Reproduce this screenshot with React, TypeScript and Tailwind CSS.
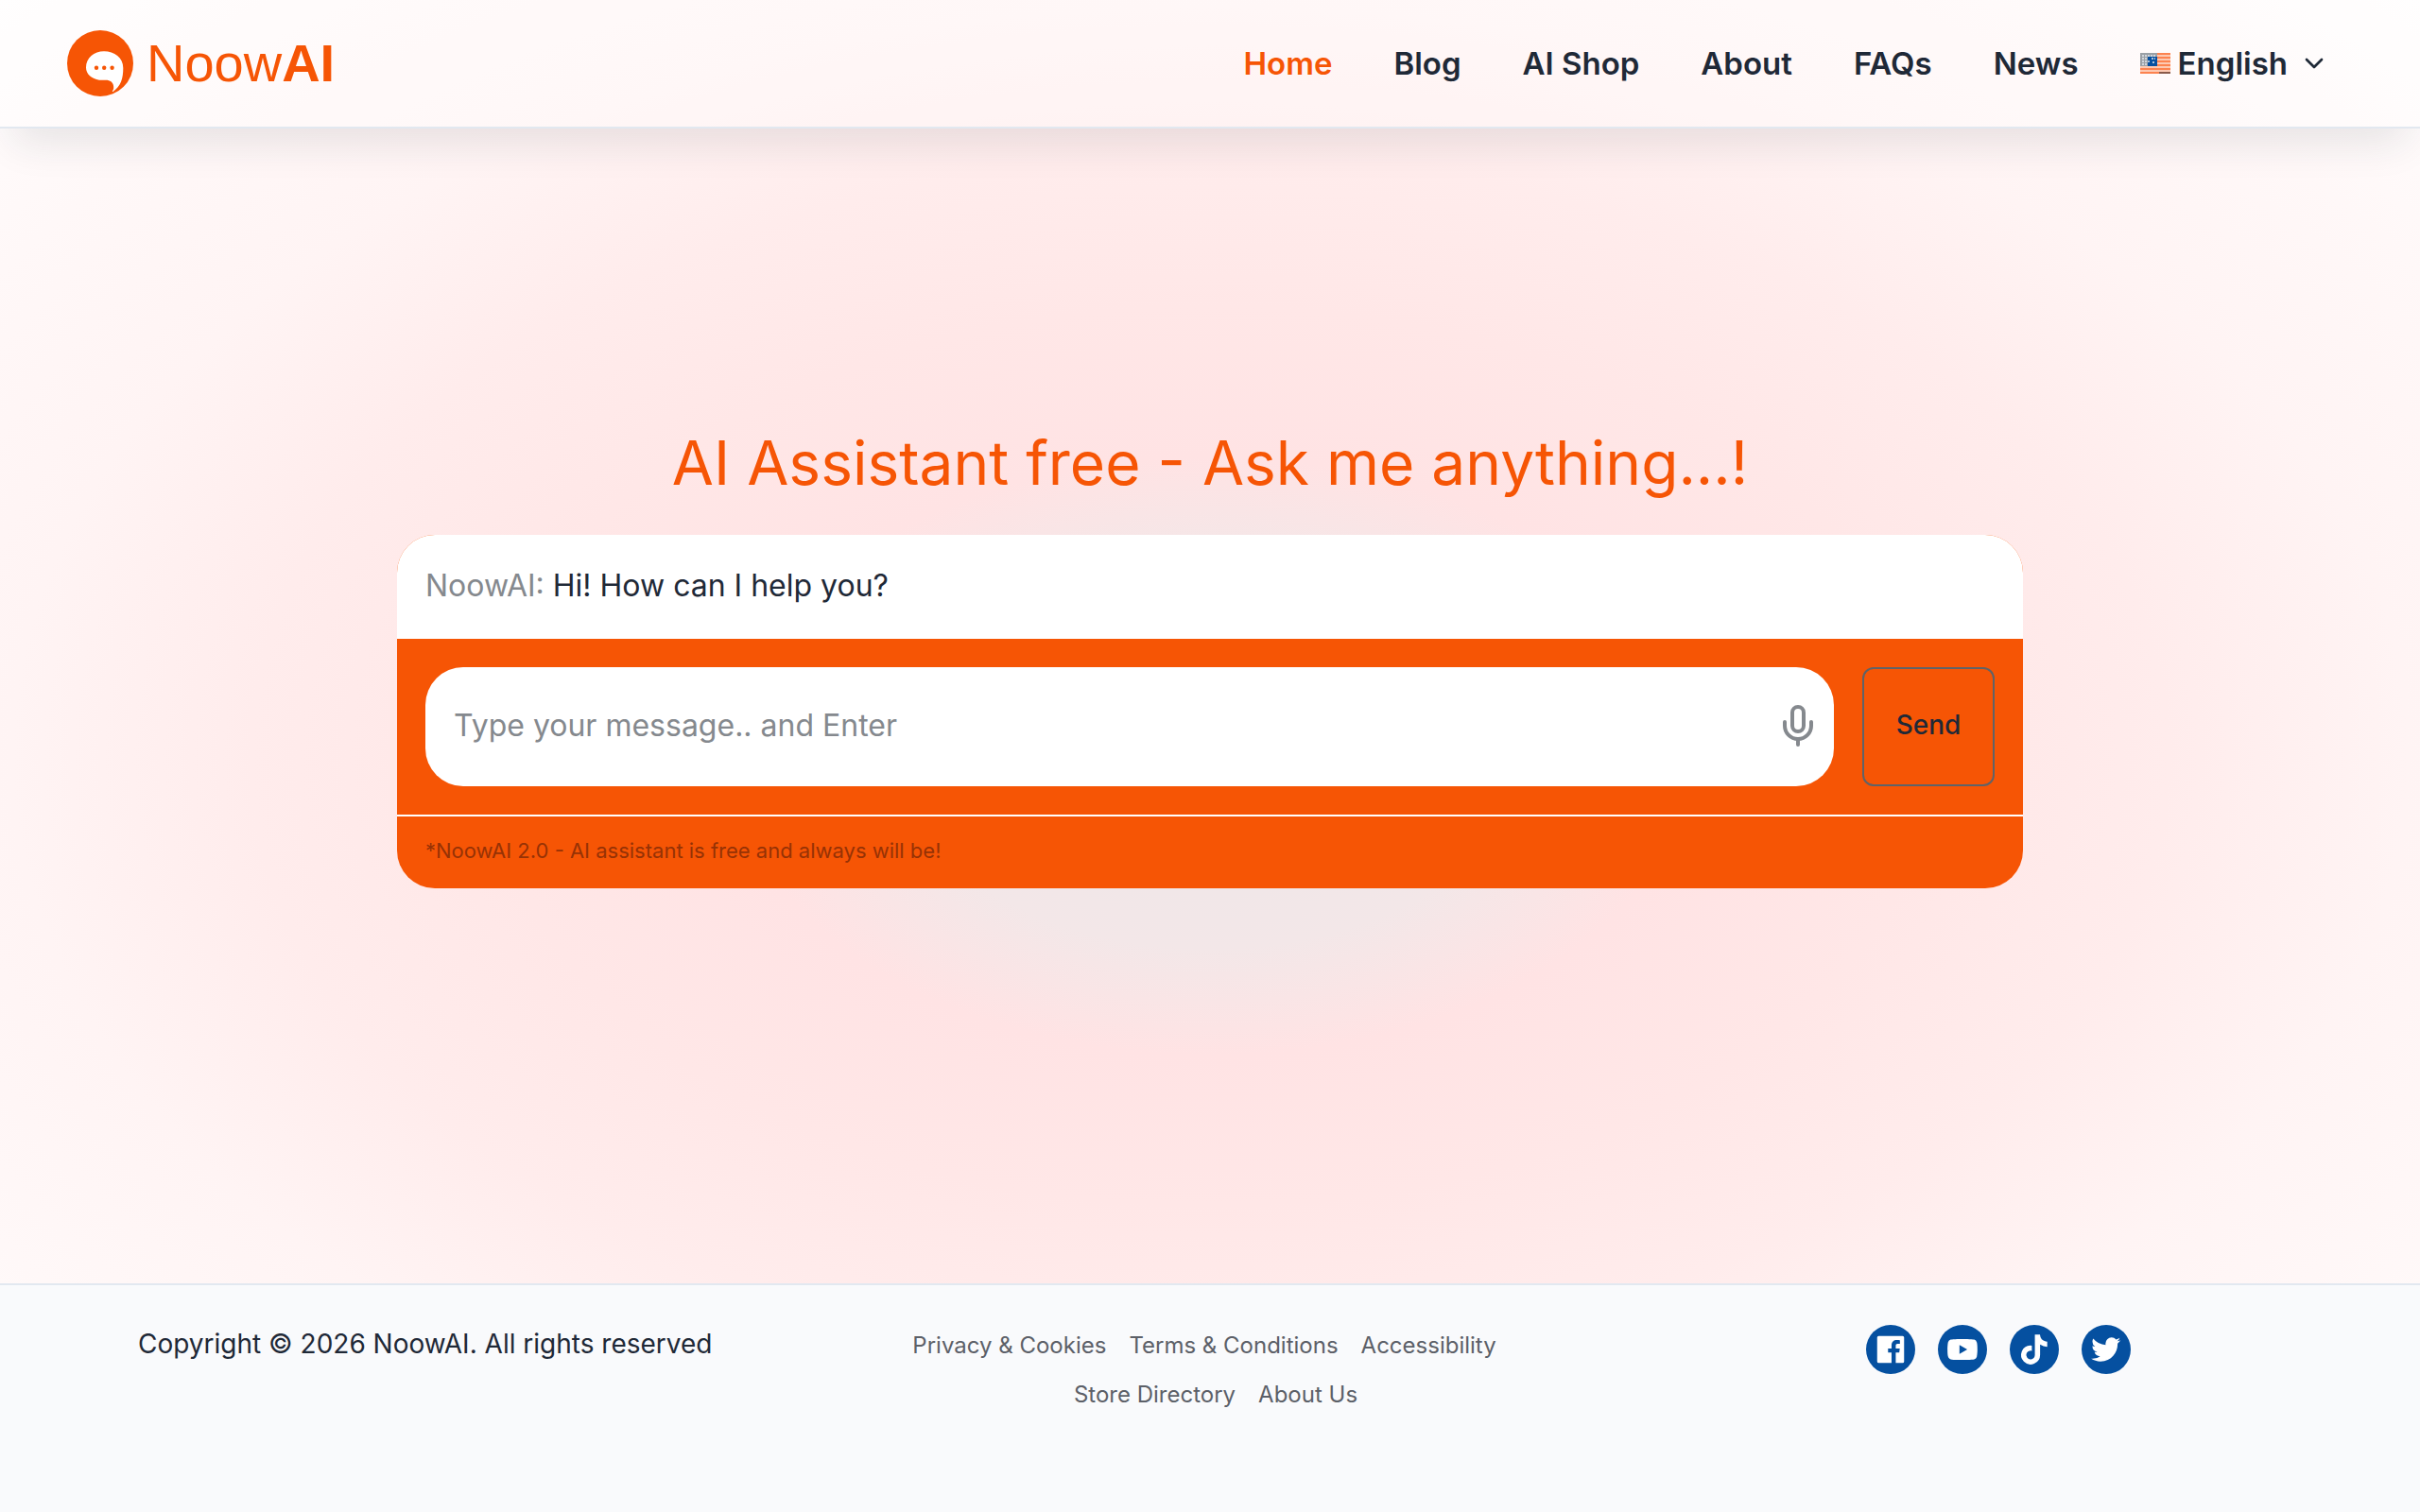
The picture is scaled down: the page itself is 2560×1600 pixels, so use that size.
import React, { FC } from "react";
import { ChevronDown, Mic } from "lucide-react";
import {
  BiLogoFacebookSquare,
  BiLogoTiktok,
  BiLogoTwitter,
  BiLogoYoutube,
} from "react-icons/bi";

const navItems = ["Home", "Blog", "AI Shop", "About", "FAQs", "News"];

const footerLinks = [
  "Privacy & Cookies",
  "Terms & Conditions",
  "Accessibility",
  "Store Directory",
  "About Us",
];

const socials = [
  { name: "Facebook", Icon: BiLogoFacebookSquare },
  { name: "YouTube", Icon: BiLogoYoutube },
  { name: "TikTok", Icon: BiLogoTiktok },
  { name: "Twitter", Icon: BiLogoTwitter },
];

const Logo: FC = () => (
  <a href="#" className="flex items-center gap-[14px] text-[#f65505]">
    <svg className="size-[70px]" viewBox="0 0 70 70" aria-hidden="true">
      <circle cx="35" cy="35" r="35" fill="currentColor" />
      <path
        d="M39 22.3C50 22.3 59.3 29 59.3 40C59.3 51 57 59 48.3 65.2L47.8 64.5C49.6 62.5 49.3 60.5 49 58.5C48.4 55 45.5 52.7 41 52.7H34C26 51.5 20 46.5 20 39.5C20 29.5 28.5 22.3 39 22.3Z"
        fill="#fff"
      />
      <circle cx="31" cy="39.7" r="2.2" fill="currentColor" />
      <circle cx="39.2" cy="39.7" r="2.2" fill="currentColor" />
      <circle cx="47.6" cy="39.7" r="2.2" fill="currentColor" />
    </svg>
    <span className="font-['Liberation_Sans',Arial,sans-serif] text-[56px] leading-[68px]">
      Noow<span className="font-bold">AI</span>
    </span>
  </a>
);

const Flag: FC = () => (
  <svg className="h-[22px] w-8" viewBox="0 0 32 22" aria-hidden="true">
    <rect width="32" height="22" fill="#fdc9b2" />
    <path
      d="M0 1H32M16 5H32M16 9H32M0 13H32M0 17H32M0 21H32"
      stroke="#fc8350"
      strokeWidth="2"
    />
    <rect width="18" height="14" fill="#9aa0a6" />
    <rect x="8" y="4" width="10" height="10" fill="#0550a0" />
    <path
      d="M2 3H16M2 6H8M12 6H16M2 9H10M2 12H8M13 10H15"
      stroke="#e3e8ee"
      strokeWidth="1.5"
      strokeDasharray="2 1"
    />
    <rect x="20" y="20" width="12" height="2" fill="#8a5a4a" />
  </svg>
);

const Header: FC = () => {
  return (
    <header className="flex items-center justify-between border-b-2 border-slate-200 bg-white/30 py-8 pr-24 pl-[71px] shadow-[0_28px_44px_-14px_rgba(30,41,59,0.11)]">
      <Logo />
      <nav className="flex items-center gap-[65px] text-[33px] leading-10 font-semibold">
        {navItems.map((item, i) => (
          <a key={item} href="#" className={i === 0 ? "text-[#f65505]" : ""}>
            {item}
          </a>
        ))}
        <button type="button" className="flex items-center">
          <Flag />
          <span className="ml-2">English</span>
          <ChevronDown className="ml-3 size-8" />
        </button>
      </nav>
    </header>
  );
};

const Chat: FC = () => {
  return (
    <main className="mx-auto w-full max-w-[1720px] flex-1 pt-[314px]">
      <h1 className="text-center text-[64px] leading-20 text-[#f65505]">
        AI Assistant free - Ask me anything...!
      </h1>

      <div className="mt-9 overflow-hidden rounded-[40px] bg-[#f65505]">
        <p className="bg-white px-[30px] pt-[30px] pb-8 text-[32px] leading-12">
          <span className="text-[#85898e]">NoowAI: </span>
          Hi! How can I help you?
        </p>
        <form className="flex gap-[30px] border-b-2 border-white p-[30px]">
          <div className="flex flex-1 items-center rounded-[40px] bg-white pr-[14px] pl-[30px]">
            <input
              type="text"
              aria-label="Message"
              placeholder="Type your message.. and Enter"
              className="h-[126px] flex-1 bg-transparent pb-1 text-[32px] outline-none placeholder:text-[#85898e]"
            />
            <button type="button" aria-label="Speak" className="pb-0.5">
              <Mic className="size-12 text-[#85898e]" />
            </button>
          </div>
          <button
            type="button"
            className="w-[140px] rounded-xl border-2 border-[#5f6368] pb-1 text-[28px] font-medium"
          >
            Send
          </button>
        </form>
        <p className="px-[30px] pt-4 pb-5 text-[22px] leading-10 text-[#963205]">
          *NoowAI 2.0 - AI assistant is free and always will be!
        </p>
      </div>
    </main>
  );
};

const Footer: FC = () => {
  return (
    <footer className="grid grid-cols-3 border-t-2 border-slate-200 bg-[#f9fafc] pt-[38px] pr-[134px] pb-[98px] pl-[146px]">
      <p className="text-[28px] leading-[48px]">
        Copyright © 2026 NoowAI. All rights reserved
      </p>
      <ul className="flex flex-wrap justify-center text-2xl leading-[52px] text-[#5c6068]">
        {footerLinks.map((link) => (
          <li key={link} className="mr-6 last:mr-0">
            <a href="#">{link}</a>
          </li>
        ))}
      </ul>
      <div className="flex gap-6 pt-1 pl-[308px]">
        {socials.map(({ name, Icon }) => (
          <a
            key={name}
            href="#"
            aria-label={name}
            className="flex size-[52px] items-center justify-center rounded-full bg-[#0550a0] text-white"
          >
            <Icon className="size-[38px]" />
          </a>
        ))}
      </div>
    </footer>
  );
};

const App: FC = () => {
  return (
    <div className="flex min-h-screen flex-col bg-[radial-gradient(ellipse_at_center,#ece7e8_0%,#f3e7e8_18%,#ffe3e4_28%,#ffe7e7_42%,#ffecec_56%,#fff4f4_70%,#fff8f8_84%,#fffefe_100%)] font-['Inter',sans-serif] text-[#1f2937]">
      <Header />
      <Chat />
      <Footer />
    </div>
  );
};

export default App;
